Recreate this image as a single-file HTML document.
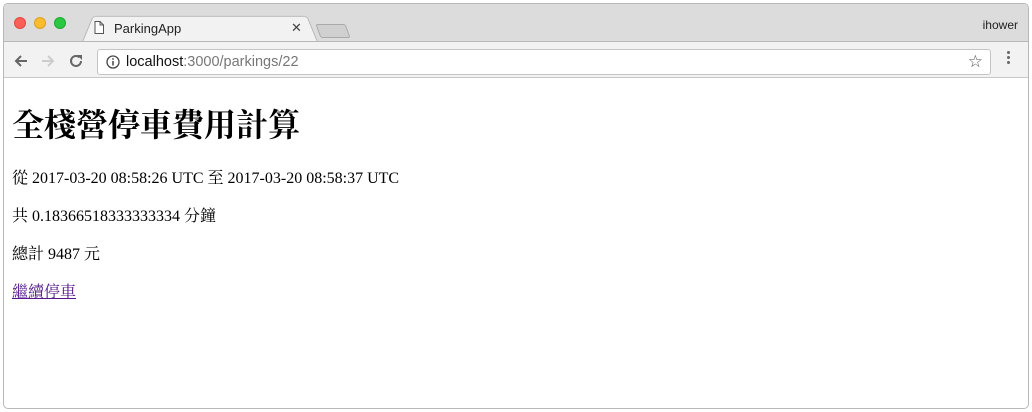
<!DOCTYPE html>
<html><head><meta charset="utf-8"><style>
*{margin:0;padding:0;box-sizing:border-box}
body{width:1032px;height:412px;background:#fff;position:relative;overflow:hidden;font-family:"Liberation Sans",sans-serif}
.win{position:absolute;left:3px;top:3px;width:1026px;height:406px;border:1px solid #b8b8b8;border-radius:5px;overflow:hidden;background:#fff}
.tabbar{position:absolute;left:0;top:0;width:100%;height:37px;background:#dcdcdc}
.dot{position:absolute;top:13px;width:12px;height:12px;border-radius:50%}
.tab{position:absolute;left:78px;top:9px;width:236px;height:29px;background:#f2f2f2;border:1px solid #b4b4b4;border-bottom:none;transform:perspective(40px) rotateX(8deg);transform-origin:bottom;border-radius:4px 4px 0 0}
.tabt{position:absolute;left:110px;top:17px;font-size:13px;color:#222}
.tool{position:absolute;left:0;top:37px;width:100%;height:37px;background:#f2f2f2;border-top:1px solid #b8b8b8;border-bottom:1px solid #c8c8c8}
.url{position:absolute;left:93px;top:7px;width:894px;height:26px;background:#fff;border:1px solid #c4c4c4;border-radius:3px}
.content{position:absolute;left:0;top:71px;width:100%;font-family:"Liberation Serif","Noto Serif CJK SC",serif;padding-left:8px}
h1{position:absolute;left:8px;top:25px;font-size:32px;font-weight:bold;white-space:nowrap;font-family:"Liberation Serif","Noto Serif CJK TC","Noto Sans CJK TC",serif}
p{position:absolute;left:8px;font-size:16px;white-space:nowrap}
a{color:#551a8b}
</style></head><body>
<div class="win">
<div class="tabbar">
<div class="dot" style="left:10px;background:#fc5f57;border:1px solid #de4a42"></div>
<div class="dot" style="left:30px;background:#fdbc2e;border:1px solid #dea123"></div>
<div class="dot" style="left:50px;background:#29c840;border:1px solid #1fa92f"></div>
<div class="tab"></div>
<svg style="position:absolute;left:90px;top:17px" width="10" height="13"><path d="M1 .5h5l3.5 3.5v8.5h-8.5z M6 .5v3.5h3.5" fill="#fff" stroke="#555"/></svg>
<div class="tabt">ParkingApp</div>
<div style="position:absolute;left:287px;top:16px;font-size:13px;color:#444">✕</div>
<div style="position:absolute;left:314px;top:20px;width:30px;height:14px;background:#d0d0d0;border:1px solid #aaa;transform:skewX(20deg);border-radius:2px"></div>
<div style="position:absolute;right:10px;top:14px;font-size:12px;color:#222">ihower</div>
</div>
<div class="tool">
<svg style="position:absolute;left:9px;top:11px" width="16" height="16"><path d="M14 8H3M8 3L3 8l5 5" fill="none" stroke="#666" stroke-width="2"/></svg>
<svg style="position:absolute;left:36px;top:11px" width="16" height="16"><path d="M2 8h11M8 3l5 5-5 5" fill="none" stroke="#ccc" stroke-width="2"/></svg>
<svg style="position:absolute;left:64px;top:11px" width="16" height="16"><path d="M13 8a5 5 0 1 1-1.5-3.6" fill="none" stroke="#666" stroke-width="2"/><path d="M9 2h5v5z" fill="#666"/></svg>
<div class="url">
<svg style="position:absolute;left:8px;top:5px" width="14" height="14"><circle cx="7" cy="7" r="6" fill="none" stroke="#444" stroke-width="1.3"/><path d="M7 6v4.5" stroke="#444" stroke-width="1.5"/><circle cx="7" cy="4" r=".9" fill="#444"/></svg>
<div style="position:absolute;left:28px;top:4px;font-size:14.5px;color:#111">localhost<span style="color:#777">:3000/parkings/22</span></div>
<div style="position:absolute;right:7px;top:2px;font-size:17px;color:#555">☆</div>
</div>
<div style="position:absolute;left:1003px;top:9px;width:3px;line-height:5px;font-size:0">
<div style="width:3px;height:3px;background:#666;border-radius:50%;margin-bottom:2px"></div><div style="width:3px;height:3px;background:#666;border-radius:50%;margin-bottom:2px"></div><div style="width:3px;height:3px;background:#666;border-radius:50%"></div></div>
</div>
<div class="content">
<h1>全棧營停車費用計算</h1>
<p style="top:90px">從 2017-03-20 08:58:26 UTC 至 2017-03-20 08:58:37 UTC</p>
<p style="top:128px">共 0.18366518333333334 分鐘</p>
<p style="top:166px">總計 9487 元</p>
<p style="top:204px"><a href="#">繼續停車</a></p>
</div>
</div>
</body></html>
